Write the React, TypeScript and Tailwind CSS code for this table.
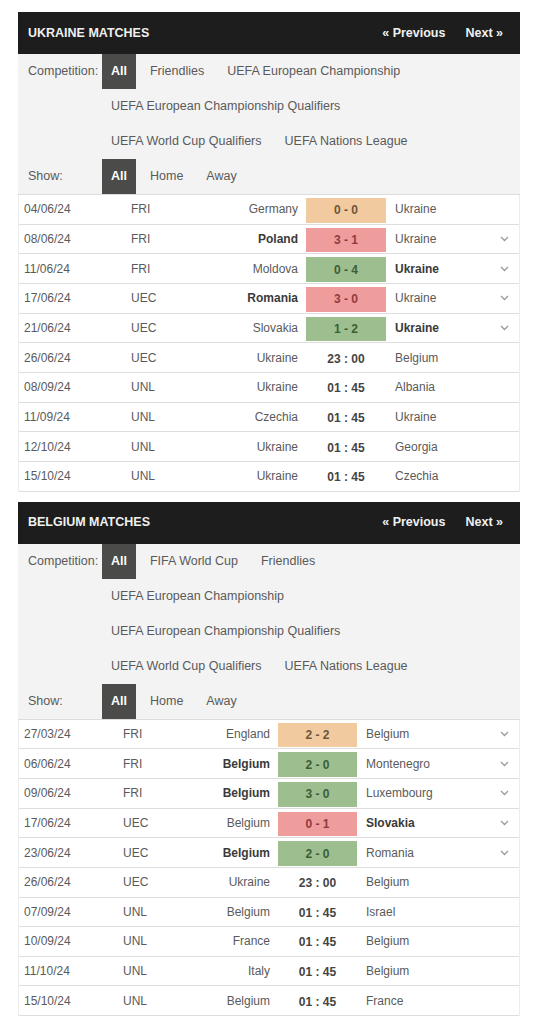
import React from "react";

type Row = {
  date: string;
  comp: string;
  home: string;
  away: string;
  score: string;
  result?: "d" | "w" | "l";
  boldHome?: boolean;
  boldAway?: boolean;
  chevron?: boolean;
};

const ukraineRows: Row[] = [
  { date: "04/06/24", comp: "FRI", home: "Germany", score: "0 - 0", away: "Ukraine", result: "d" },
  { date: "08/06/24", comp: "FRI", home: "Poland", score: "3 - 1", away: "Ukraine", result: "l", boldHome: true, chevron: true },
  { date: "11/06/24", comp: "FRI", home: "Moldova", score: "0 - 4", away: "Ukraine", result: "w", boldAway: true, chevron: true },
  { date: "17/06/24", comp: "UEC", home: "Romania", score: "3 - 0", away: "Ukraine", result: "l", boldHome: true, chevron: true },
  { date: "21/06/24", comp: "UEC", home: "Slovakia", score: "1 - 2", away: "Ukraine", result: "w", boldAway: true, chevron: true },
  { date: "26/06/24", comp: "UEC", home: "Ukraine", score: "23 : 00", away: "Belgium" },
  { date: "08/09/24", comp: "UNL", home: "Ukraine", score: "01 : 45", away: "Albania" },
  { date: "11/09/24", comp: "UNL", home: "Czechia", score: "01 : 45", away: "Ukraine" },
  { date: "12/10/24", comp: "UNL", home: "Ukraine", score: "01 : 45", away: "Georgia" },
  { date: "15/10/24", comp: "UNL", home: "Ukraine", score: "01 : 45", away: "Czechia" },
];

const belgiumRows: Row[] = [
  { date: "27/03/24", comp: "FRI", home: "England", score: "2 - 2", away: "Belgium", result: "d", chevron: true },
  { date: "06/06/24", comp: "FRI", home: "Belgium", score: "2 - 0", away: "Montenegro", result: "w", boldHome: true, chevron: true },
  { date: "09/06/24", comp: "FRI", home: "Belgium", score: "3 - 0", away: "Luxembourg", result: "w", boldHome: true, chevron: true },
  { date: "17/06/24", comp: "UEC", home: "Belgium", score: "0 - 1", away: "Slovakia", result: "l", boldAway: true, chevron: true },
  { date: "23/06/24", comp: "UEC", home: "Belgium", score: "2 - 0", away: "Romania", result: "w", boldHome: true, chevron: true },
  { date: "26/06/24", comp: "UEC", home: "Ukraine", score: "23 : 00", away: "Belgium" },
  { date: "07/09/24", comp: "UNL", home: "Belgium", score: "01 : 45", away: "Israel" },
  { date: "10/09/24", comp: "UNL", home: "France", score: "01 : 45", away: "Belgium" },
  { date: "11/10/24", comp: "UNL", home: "Italy", score: "01 : 45", away: "Belgium" },
  { date: "15/10/24", comp: "UNL", home: "Belgium", score: "01 : 45", away: "France" },
];

function Chevron() {
  return (
    <svg width="9" height="6" viewBox="0 0 9 6" fill="none">
      <polyline points="1,1 4.5,4.5 8,1" stroke="#9a9a9a" strokeWidth="1.3" />
    </svg>
  );
}

function ScoreCell({ row }: { row: Row }) {
  const box =
    row.result === "d"
      ? "bg-[#f1caa0] text-[#6e5638]"
      : row.result === "w"
      ? "bg-[#9dbe8e] text-[#3a5f37]"
      : row.result === "l"
      ? "bg-[#ee9c9c] text-[#8e3b40]"
      : "text-[#444]";
  return (
    <div className="pt-[3px] pb-[1px] h-full">
      <div className={`h-full flex items-center justify-center font-bold ${box}`}>{row.score}</div>
    </div>
  );
}

function MatchRows({ rows, cols }: { rows: Row[]; cols: string }) {
  return (
    <div className="border-x border-[#ececec] bg-white">
      {rows.map((r, i) => (
        <div
          key={i}
          className={`grid ${cols} h-[29.67px] border-b border-[#dedede] text-[12px] text-[#5a5a5a] items-stretch`}
        >
          <div className="flex items-center pl-[5px]">{r.date}</div>
          <div className="flex items-center pl-[6px]">{r.comp}</div>
          <div className={`flex items-center justify-end pr-2 whitespace-nowrap ${r.boldHome ? "font-bold text-[#3a3a3a]" : ""}`}>
            {r.home}
          </div>
          <ScoreCell row={r} />
          <div className={`flex items-center pl-[9px] whitespace-nowrap ${r.boldAway ? "font-bold text-[#3a3a3a]" : ""}`}>
            {r.away}
          </div>
          <div className="flex items-center justify-center">{r.chevron ? <Chevron /> : null}</div>
        </div>
      ))}
    </div>
  );
}

function FilterItem({ label, active }: { label: string; active?: boolean }) {
  return (
    <div
      className={`h-[35px] px-[9px] mr-[5px] flex items-center whitespace-nowrap ${
        active ? "bg-[#4b4b49] text-white font-bold" : "text-[#5a5a5a]"
      }`}
    >
      {label}
    </div>
  );
}

function Panel({
  title,
  comps,
  rows,
  cols,
}: {
  title: string;
  comps: string[];
  rows: Row[];
  cols: string;
}) {
  return (
    <div className="w-[502px]">
      <div className="h-[42px] bg-[#1d1d1d] flex items-center justify-between pl-[10px] pr-[17px] text-[12.5px] font-bold text-[#f0f0f0]">
        <div>{title}</div>
        <div className="flex gap-[20px]">
          <span>« Previous</span>
          <span>Next »</span>
        </div>
      </div>
      <div className="bg-[#f3f3f3] text-[12.5px] border-b border-[#dcdcdc]">
        <div className="flex">
          <div className="w-[84px] pl-[10px] h-[35px] flex items-center text-[#5a5a5a]">Competition:</div>
          <div className="w-[370px] flex flex-wrap">
            <FilterItem label="All" active />
            {comps.map((c) => (
              <FilterItem key={c} label={c} />
            ))}
          </div>
        </div>
        <div className="flex">
          <div className="w-[84px] pl-[10px] h-[35px] flex items-center text-[#5a5a5a]">Show:</div>
          <div className="flex">
            <FilterItem label="All" active />
            <FilterItem label="Home" />
            <FilterItem label="Away" />
          </div>
        </div>
      </div>
      <MatchRows rows={rows} cols={cols} />
    </div>
  );
}

export default function App() {
  return (
    <div className="min-h-screen bg-white pt-[12px] pl-[18px] font-['Liberation_Sans',Arial,sans-serif]">
      <Panel
        title="UKRAINE MATCHES"
        comps={[
          "Friendlies",
          "UEFA European Championship",
          "UEFA European Championship Qualifiers",
          "UEFA World Cup Qualifiers",
          "UEFA Nations League",
        ]}
        rows={ukraineRows}
        cols="grid-cols-[106px_100px_81px_80px_1fr_30px]"
      />
      <div className="h-[10px]" />
      <Panel
        title="BELGIUM MATCHES"
        comps={[
          "FIFA World Cup",
          "Friendlies",
          "UEFA European Championship",
          "UEFA European Championship Qualifiers",
          "UEFA World Cup Qualifiers",
          "UEFA Nations League",
        ]}
        rows={belgiumRows}
        cols="grid-cols-[98px_100px_61px_79px_1fr_30px]"
      />
    </div>
  );
}
